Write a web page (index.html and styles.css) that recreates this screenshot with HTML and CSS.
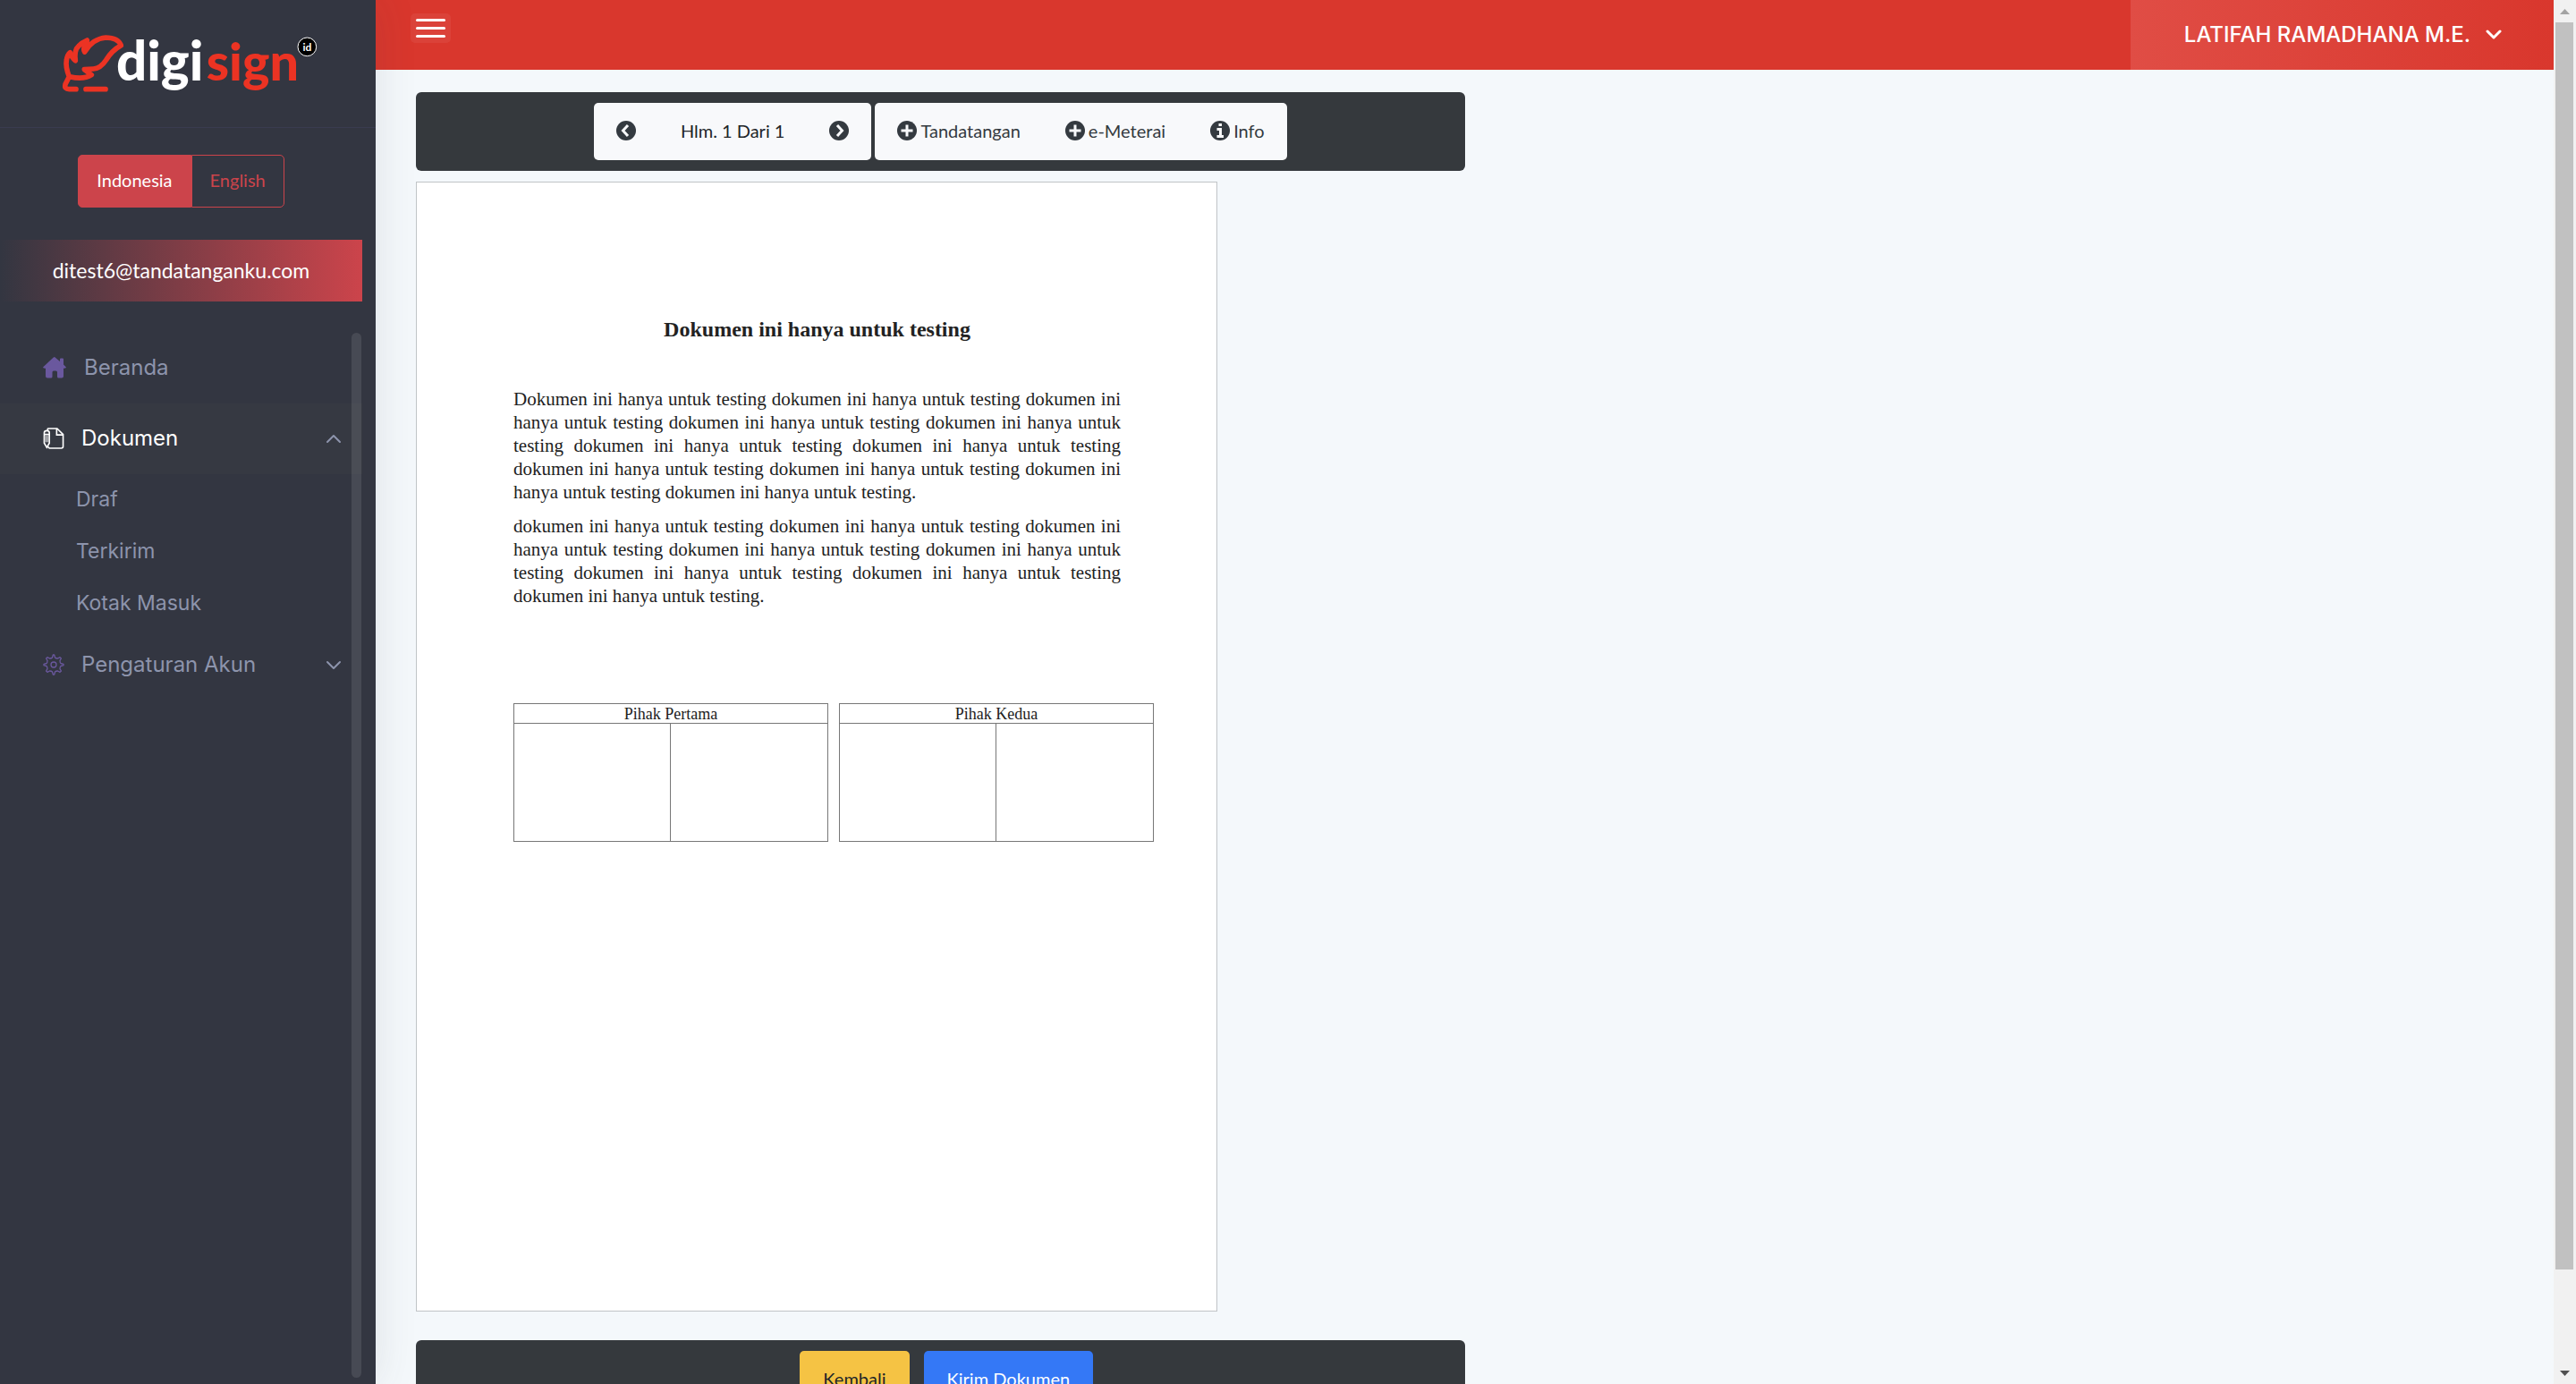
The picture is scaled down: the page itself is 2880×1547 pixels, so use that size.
FILE: index.html
```html
<!DOCTYPE html>
<html lang="id">
<head>
<meta charset="utf-8">
<meta name="viewport" content="width=device-width, initial-scale=1">
<title>Digisign</title>
<link rel="stylesheet" href="styles.css">
</head>
<body>
<div class="app">
  <aside class="sidebar">
    <a class="brand" href="#" aria-label="digisign id">
      <svg class="brand-logo" viewBox="60 50 855 201">
        <g fill="none" stroke="#ec3323" stroke-width="17" stroke-linecap="round" stroke-linejoin="round">
          <path d="M105 235H82Q65 235 69 219L82 193Q69 160 73 138Q76 119 85 112Q89 128 103 139Q98 104 114 90Q125 78 142 71L139 84Q127 98 134 110Q160 66 205 62Q245 62 256 88Q224 106 206 137Q187 166 163 167L133 169L157 187Q130 204 84 193"/>
          <path d="M138 235H204"/>
        </g>
        <text class="logo-text" y="207"><tspan class="logo-first" x="240" fill="#fff">digi</tspan><tspan x="542" fill="#ec3323">sign</tspan></text>
        <circle cx="880" cy="93" r="31" fill="#000" stroke="#fff" stroke-width="3"/>
        <text class="logo-id" x="880" y="107" text-anchor="middle" fill="#fff">id</text>
      </svg>
    </a>
    <div class="language">
      <button class="language-btn active" type="button">Indonesia</button>
      <button class="language-btn" type="button">English</button>
    </div>
    <div class="account">ditest6@tandatanganku.com</div>
    <nav class="menu">
      <ul class="menu-list">
        <li><a class="menu-link home" href="#">
          <svg class="menu-icon" viewBox="0 0 26 24" fill="#6a589e"><path d="M13 0 19 5V2.500Q19 1.500 20 1.500H22Q23 1.500 23 2.500V8.500L26 11.500Q25.500 13 23 12.800V21.500Q23 23.500 21 23.500H17.500Q16 23.500 16 22V17Q16 15.500 14.500 15.500H12Q10.500 15.500 10.500 17V22Q10.500 23.500 9 23.500H5Q3 23.500 3 21.500V12.800Q.5 13 0 11.500L11.500 .8Q12.300 0 13 0Z"/></svg>
          <span>Beranda</span></a></li>
        <li><a class="menu-link current" href="#">
          <svg class="menu-icon" viewBox="0 0 24 25" fill="none" stroke="#fff" stroke-width="1.700"><path d="M5 3V2Q5 1 6 1H16L23 8V22Q23 24 21 24H7L5 22" /><path d="M15.500 1V8.500H23"/><path d="M1 6Q1 3.500 4 3.500T7 6V18L4 23 1 18ZM1 8H7"/><path d="M3 9.500V17M5 9.500V17" stroke-width="1"/></svg>
          <span>Dokumen</span>
          <svg class="chevron" viewBox="0 0 18 18"><path d="M2 13 9 6 16 13"/></svg></a>
          <ul class="submenu">
            <li><a href="#">Draf</a></li>
            <li><a href="#">Terkirim</a></li>
            <li><a href="#">Kotak Masuk</a></li>
          </ul></li>
        <li><a class="menu-link" href="#">
          <svg class="menu-icon" viewBox="0 0 24 24" fill="none" stroke="#6a589e" stroke-width="1.300" stroke-linejoin="round"><circle cx="12" cy="12" r="3"/><path d="M10.500 4 11.300 1H12.700L13.500 4Q14.300 5 16.600 5L19 3.600 20.400 5 19 7.400Q19 9.700 20 10.500L23 11.300V12.700L20 13.500Q19 14.300 19 16.600L20.400 19 19 20.400 16.600 19Q14.300 19 13.500 20L12.700 23H11.300L10.500 20Q9.700 19 7.400 19L5 20.400 3.600 19 5 16.600Q5 14.300 4 13.500L1 12.700V11.300L4 10.500Q5 9.700 5 7.400L3.600 5 5 3.600 7.400 5Q9.700 5 10.500 4Z"/></svg>
          <span>Pengaturan Akun</span>
          <svg class="chevron" viewBox="0 0 18 18"><path d="M2 6 9 13 16 6"/></svg></a></li>
      </ul>
      <div class="menu-scroll"></div>
    </nav>
  </aside>

  <div class="content">
    <header class="topbar">
      <button class="toggle" type="button" aria-label="Menu"><i></i><i></i><i></i></button>
      <button class="user" type="button">LATIFAH RAMADHANA M.E.
        <svg class="chevron" viewBox="0 0 18 18"><path d="M2 6 9 13 16 6"/></svg></button>
    </header>
    <main class="workspace">
      <div class="toolbar tools">
        <div class="group">
          <button class="tool" type="button" aria-label="Sebelumnya"><svg class="tool-icon" viewBox="0 0 22 22"><circle cx="11" cy="11" r="11"/><path d="M13 5 7.500 11 13 17"/></svg></button>
          <span class="tool page-count">Hlm. 1 Dari 1</span>
          <button class="tool" type="button" aria-label="Berikutnya"><svg class="tool-icon" viewBox="0 0 22 22"><circle cx="11" cy="11" r="11"/><path d="M9 5 14.500 11 9 17"/></svg></button>
        </div>
        <div class="group">
          <button class="tool" type="button"><svg class="tool-icon" viewBox="0 0 22 22"><circle cx="11" cy="11" r="11"/><path d="M11 4.500V17.500M4.500 11H17.500" stroke-width="3.500"/></svg>Tandatangan</button>
          <button class="tool" type="button"><svg class="tool-icon" viewBox="0 0 22 22"><circle cx="11" cy="11" r="11"/><path d="M11 4.500V17.500M4.500 11H17.500" stroke-width="3.500"/></svg>e-Meterai</button>
          <button class="tool" type="button"><svg class="tool-icon" viewBox="0 0 22 22"><circle cx="11" cy="11" r="11"/><path d="M9.500 4.500H13M7.500 9.500H11.500V17M7.500 17.500H15"/></svg>Info</button>
        </div>
      </div>

      <article class="sheet">
        <h1>Dokumen ini hanya untuk testing</h1>
        <p>Dokumen ini hanya untuk testing dokumen ini hanya untuk testing dokumen ini hanya untuk testing dokumen ini hanya untuk testing dokumen ini hanya untuk testing dokumen ini hanya untuk testing dokumen ini hanya untuk testing dokumen ini hanya untuk testing dokumen ini hanya untuk testing dokumen ini hanya untuk testing dokumen ini hanya untuk testing.</p>
        <p>dokumen ini hanya untuk testing dokumen ini hanya untuk testing dokumen ini hanya untuk testing dokumen ini hanya untuk testing dokumen ini hanya untuk testing dokumen ini hanya untuk testing dokumen ini hanya untuk testing dokumen ini hanya untuk testing.</p>
        <div class="parties">
          <table><thead><tr><th colspan="2">Pihak Pertama</th></tr></thead><tbody><tr><td></td><td></td></tr></tbody></table>
          <table><thead><tr><th colspan="2">Pihak Kedua</th></tr></thead><tbody><tr><td></td><td></td></tr></tbody></table>
        </div>
      </article>

      <div class="toolbar actions">
        <button class="action back" type="button">Kembali</button>
        <button class="action send" type="button">Kirim Dokumen</button>
      </div>
    </main>
  </div>

  <div class="scrollbar">
    <svg class="arrow" viewBox="0 0 25 25"><path d="M7 16H18L12.500 10Z" fill="#a3a3a3"/></svg>
    <div class="track"><div class="thumb"></div></div>
    <svg class="arrow" viewBox="0 0 25 25"><path d="M7 10H18L12.500 16Z" fill="#505050"/></svg>
  </div>
</div>
</body>
</html>
```
FILE: styles.css
```css
* { box-sizing: border-box; }
body { margin: 0; font-family: Lato, "Liberation Sans", sans-serif; background: #f4f8fb; }
button { font: inherit; margin: 0; border: 0; cursor: pointer; }
a { text-decoration: none; color: inherit; }
ul { list-style: none; margin: 0; padding: 0; }

.app { display: flex; height: 100vh; overflow: hidden; }

/* Sidebar */
.sidebar {
  flex: 0 0 420px;
  display: flex;
  flex-direction: column;
  background: #333641;
  box-shadow: 0 0 45px rgba(69, 65, 78, .12);
  z-index: 1;
}
.brand { display: flex; align-items: center; height: 143px; padding-left: 70px; border-bottom: 1px solid #3a3c4f; }
.brand-logo { width: 285px; height: 67px; overflow: visible; }
.logo-text { font: 900 172px Lato, sans-serif; }
.logo-first { font-size: 180px; }
.logo-id { font: 700 36px Lato, sans-serif; }

.language { display: flex; justify-content: center; margin: 30px 15px 36px 0; }
.language-btn {
  height: 59px;
  padding: 0 20px 3px;
  border: 1px solid #cc444b;
  border-radius: 0 5px 5px 0;
  background: transparent;
  color: #cc444b;
  font-size: 20px;
}
.language-btn.active { border-radius: 5px 0 0 5px; background: #cc444b; color: #fff; }

.account {
  margin: 0 15px 35px 0;
  line-height: 69px;
  text-align: center;
  color: #fff;
  font-size: 23px;
  background: linear-gradient(90deg, #333641, #cc444b);
}

.menu { flex: 1; display: flex; min-height: 0; position: relative; color: #8d94ac; font-family: Inter, sans-serif; font-size: 24px; }
.menu-list { flex: 1; margin-right: 15px; }
.menu-link { display: flex; align-items: center; height: 79px; padding: 0 23px 2px 48px; }
.menu-icon { width: 24px; height: 24px; margin-right: 19px; }
.home .menu-icon { width: 26px; margin-right: 20px; }
.current { background: #363942; color: #fff; }
.chevron { width: 18px; height: 18px; fill: none; stroke: #8d94ac; stroke-width: 2; stroke-linecap: round; stroke-linejoin: round; }
.menu-link .chevron { margin-left: auto; }
.submenu a { display: block; height: 58px; padding-left: 85px; font-size: 23px; line-height: 56px; }
.menu-scroll { position: absolute; top: 0; right: 16px; bottom: 7px; width: 11px; border-radius: 6px; background: rgba(255, 255, 255, .1); }

/* Content */
.content { flex: 1; min-width: 0; }
.topbar { display: flex; align-items: stretch; justify-content: space-between; height: 78px; padding-left: 39px; background: #d9372d; }
.toggle {
  display: flex;
  flex-direction: column;
  justify-content: center;
  gap: 6px;
  width: 45px;
  height: 33px;
  margin-top: 15px;
  padding: 0 6px;
  border-radius: 5px;
  background: rgba(255, 255, 255, .06);
}
.toggle i { height: 3px; border-radius: 2px; background: #fff; }
.user {
  display: flex;
  align-items: center;
  gap: 17px;
  padding: 0 58px 2px 60px;
  color: #fff;
  font: 500 24px Inter, sans-serif;
  background: linear-gradient(90deg, #e04d45, #d9372d);
}
.user .chevron { stroke: #fff; stroke-width: 3; }

.workspace { padding: 25px 45px; }
.toolbar { display: flex; justify-content: center; width: 50%; padding: 12px; border-radius: 6px; background: #35393d; }
.tools { gap: 4px; }
.group { display: flex; height: 64px; border-radius: 5px; background: #f8f9fb; }
.tool { display: flex; align-items: center; gap: 4px; padding: 0 25px 2px; background: transparent; color: #343a40; font-size: 20px; }
.page-count { color: #212529; }
.tool-icon { width: 22px; height: 22px; fill: #343a40; }
.tool-icon path { fill: none; stroke: #f8f9fb; stroke-width: 3; }

.sheet {
  width: 896px;
  min-height: 1263px;
  margin: 12px 0 32px;
  padding: 150px 70px 0 108px;
  border: 1px solid #c0c4c7;
  background: #fff;
  color: #222;
  font-family: "Liberation Serif", serif;
}
.sheet h1 { margin: 0 37px 51px 0; font-size: 24px; line-height: 28px; text-align: center; }
.sheet p { margin: 0 37px 12px 0; font-size: 21px; line-height: 26px; text-align: justify; }
.parties { display: flex; gap: 12px; margin-top: 107px; }
.parties table { flex: 1; border-collapse: collapse; table-layout: fixed; }
.parties th, .parties td { padding: 0; border: 1px solid #777; }
.parties th { height: 22px; font-size: 18px; font-weight: 400; line-height: 20px; }
.parties td { height: 132px; }

.actions { gap: 16px; padding-left: 26px; }
.action { height: 64px; padding: 0 26px 3px; border-radius: 5px; font-size: 20px; }
.back { background: #f5c344; color: #212529; }
.send { background: #3478f6; color: #fff; }

/* Window scrollbar */
.scrollbar { flex: 0 0 25px; display: flex; flex-direction: column; background: #f1f1f1; }
.arrow { flex: none; width: 25px; height: 25px; }
.track { flex: 1; padding: 0 3px 0 2px; }
.thumb { height: calc(100% - 103px); background: #c1c1c1; }
```
